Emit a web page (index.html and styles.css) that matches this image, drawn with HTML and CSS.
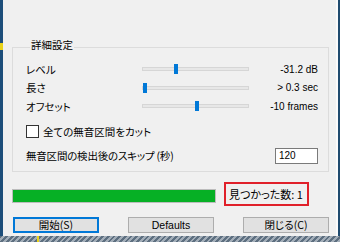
FILE: index.html
```html
<!DOCTYPE html>
<html lang="ja">
<head>
  <meta charset="UTF-8" />
  <title>詳細設定</title>
  <link rel="stylesheet" href="styles.css">
</head>
<body>
  <div class="desk">
    <div class="row-main">
      <div class="edge-left"></div>

      <div class="dialog">
        <!-- 詳細設定 -->
        <fieldset class="group">
          <legend>詳細設定</legend>

          <div class="params">
            <span class="label">レベル</span>
            <div class="slider"><span class="thumb" style="left:31px"></span></div>
            <span class="value">-31.2 dB</span>

            <span class="label">長さ</span>
            <div class="slider"><span class="thumb" style="left:0px"></span></div>
            <span class="value">&gt; 0.3 sec</span>

            <span class="label">オフセット</span>
            <div class="slider"><span class="thumb" style="left:52px"></span></div>
            <span class="value">-10 frames</span>
          </div>

          <label class="check"><span class="box"></span>全ての無音区間をカット</label>

          <div class="skip">
            <span>無音区間の検出後のスキップ (秒)</span>
            <span class="field">120</span>
          </div>
        </fieldset>

        <!-- 進捗 -->
        <div class="status">
          <div class="progress"><div class="fill"></div></div>
          <div class="found">見つかった数: 1</div>
        </div>

        <!-- ボタン -->
        <div class="buttons">
          <button class="btn focus">開始(S)</button>
          <button class="btn latin">Defaults</button>
          <button class="btn">閉じる(C)</button>
        </div>
      </div>

      <div class="edge-right"></div>
    </div>
    <div class="edge-bottom"></div>
  </div>
</body>
</html>
```

FILE: styles.css
```css
* {
  box-sizing: border-box;
}

body {
  margin: 0;
  font-family: "Noto Sans CJK JP", sans-serif;
  font-size: 10.5px;
  font-feature-settings: "palt";
  color: #000;
}

.desk {
  width: 340px;
  height: 242px;
  display: flex;
  flex-direction: column;
  background-color: #1f4c74;
}

.row-main {
  display: flex;
  height: 236px;
}

.edge-left {
  width: 3px;
  background: linear-gradient(#1d4e7a 0 43px, #e8d21a 43px 50px, #1d4e7a 50px);
}

.edge-right {
  width: 4px;
  border-left: 2px solid #fafafa;
  background-color: #1f4a6e;
}

.edge-bottom {
  height: 6px;
  background:
    linear-gradient(90deg, transparent 37px, #e8d21a 37px 39px, transparent 39px),
    repeating-linear-gradient(135deg, #5d6f80 0 2px, #a2adb8 2px 4px);
}

.dialog {
  flex: 1;
  background-color: #f0f0f0;
  padding: 38px 7px 0 9px;
  display: flex;
  flex-direction: column;
}

.group {
  margin: 0;
  padding: 0 10px 0 13px;
  border: 1px solid #dcdcdc;
  height: 134px;
  min-width: 0;
}

.group legend {
  margin-left: 4px;
  padding: 0 1px 5px;
  line-height: 13px;
}

.params {
  display: grid;
  grid-template-columns: 116px 107px 1fr;
  grid-auto-rows: 18.5px;
  align-items: center;
  margin-top: 4px;
}

.slider {
  position: relative;
  height: 4px;
  background-color: #e7e7e7;
  border: 1px solid #d6d6d6;
}

.thumb {
  position: absolute;
  top: -4px;
  width: 4px;
  height: 10px;
  background-color: #0078d7;
}

.value {
  text-align: right;
  font-family: "Liberation Sans", sans-serif;
  font-size: 10px;
}

.check {
  display: flex;
  align-items: center;
  gap: 4px;
  margin-top: 8px;
  height: 16px;
}

.box {
  width: 13px;
  height: 13px;
  border: 1px solid #333;
  background-color: #fff;
}

.skip {
  display: flex;
  align-items: center;
  justify-content: space-between;
  margin-top: 8px;
  letter-spacing: -0.2px;
}

.field {
  width: 43px;
  height: 16px;
  padding: 0 3px;
  line-height: 14px;
  letter-spacing: 0;
  border: 1px solid #7a7a7a;
  background-color: #fff;
  font-family: "Liberation Sans", sans-serif;
  font-size: 10px;
}

.status {
  display: flex;
  align-items: flex-start;
  gap: 8px;
  margin-top: 10px;
}

.progress {
  width: 204px;
  height: 14px;
  margin-top: 7px;
  border: 1px solid #bcbcbc;
  background-color: #e6e6e6;
}

.fill {
  height: 100%;
  background-color: #06b025;
}

.found {
  height: 24px;
  padding: 0 4px 0 3px;
  line-height: 20px;
  border: 2px solid #e0202a;
  font-size: 11px;
}

.buttons {
  display: flex;
  justify-content: space-between;
  margin: 11px 0 0 1px;
}

.btn {
  width: 86px;
  height: 16px;
  padding: 0;
  font-family: inherit;
  font-size: 10.5px;
  font-feature-settings: "palt";
  line-height: 14px;
  color: #000;
  background-color: #e1e1e1;
  border: 1px solid #adadad;
}

.btn.focus {
  border: 2px solid #0078d7;
  line-height: 12px;
}

.btn.latin {
  font-family: "Liberation Sans", sans-serif;
}
```
